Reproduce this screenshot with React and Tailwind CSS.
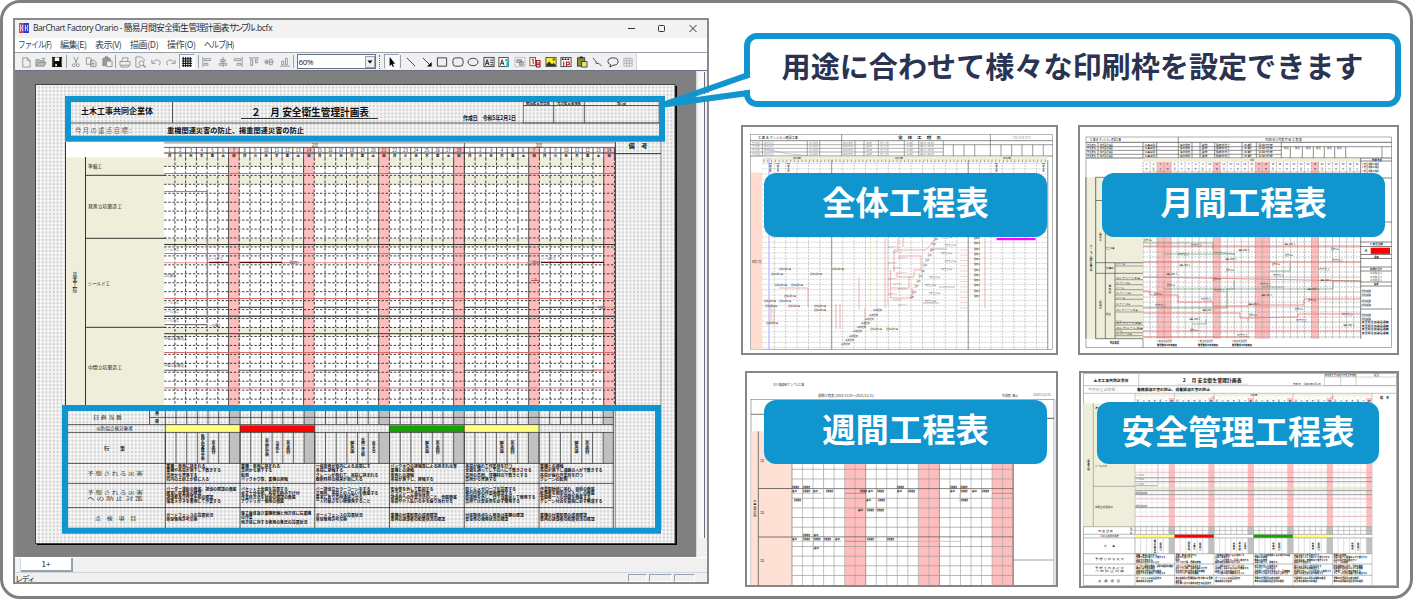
import React from "react";

const BLUE = "#1095ce";
const range = (n) => Array.from({ length: n }, (_, i) => i);

/* ---------- small svg helpers ---------- */

// t = text, w = width the text is fitted to
const T = ({ x, y, s = 5, w, t, fill = "#111", bold, anchor, vertical }) => (
  <text
    x={x}
    y={y}
    fontSize={s}
    fill={fill}
    fontWeight={bold ? 700 : 400}
    textAnchor={anchor}
    textLength={w}
    lengthAdjust={w ? "spacingAndGlyphs" : undefined}
    writingMode={vertical ? "vertical-rl" : undefined}
  >
    {t}
  </text>
);

const H = ({ y, x1, x2, c = "#333", w = 0.8, dash }) => (
  <line x1={x1} x2={x2} y1={y} y2={y} stroke={c} strokeWidth={w} strokeDasharray={dash} />
);

const V = ({ x, y1, y2, c = "#333", w = 0.8, dash }) => (
  <line x1={x} x2={x} y1={y1} y2={y2} stroke={c} strokeWidth={w} strokeDasharray={dash} />
);

const Box = ({ x1, y1, x2, y2, fill = "none", c, w = 0.6 }) => (
  <rect x={x1} y={y1} width={x2 - x1} height={y2 - y1} fill={fill} stroke={c} strokeWidth={w} />
);

const WEEK = ["月", "火", "水", "木", "金", "土", "日"];

const RISKS = [
  ["重機・車両に挟まれる", "重機や吊荷が落下し下敷きする", "高所から墜落する", "坑内の土砂上が目に入る"],
  ["重機・車両に挟まれる", "高所から落下する", "転倒", "バックホウ等、重機の接触"],
  ["一般車両が車内による追突にす", "吊荷に接触する", "クレーンが倒れて、吊荷に挟まれる", "掘削残材の飛来が目に入る"],
  ["バックホウの接触等による挟まれ災害", "重機との接触", "車両との接触", "吊荷が落下し、接触する"],
  ["吊荷が振れて作業員を打つ", "合図を誤ってし下の人に下敷きさせる", "高所の高所、資機材の下敷きとする", "高所から墜落する"],
  ["重機との接触", "吊荷が落下し通路の人が下敷きする", "吊荷が振れ作業員を打つ", "クレーンの転倒"],
];

const MEASURES = [
  ["バーダー運転の徹底、誘導の確認の徹底", "確実に荷重及の確認", "誘導者及び作業手順の確認", "保護メガネを着用して作業する"],
  ["バケット土合図を設置する", "必ず十分手順、吊荷を積み下げ付", "作業員方法を状態の確認の徹底", "アウトリガー使用の徹底"],
  ["バー誘導立カラーコーンをする", "立哨員、吊荷との人払いを徹底する", "基本に反り高所通過させる", "一人行動さない様使用すること"],
  ["安全帯を外して監視する", "グラウシーグ吊の設置", "誘導員への作業方法のこと、合図徹底", "吊荷や介人払いる手を振り当わせる"],
  ["防じんメガローブを設置する", "移行内等の作業場確認する", "防護時を外し、日下活重量して使用する", "高所では安全帯を必ず使用する"],
  ["作業開始前に吊れ、目前の徹底", "転落者を固定の立入さしの徹底", "合図者一人の合図を徹底する", "グレーン付近を基盤に必ず無運する"],
];

const CHECKS = [
  ["ガードフェンスの設置状況", "電球使用許可交換"],
  ["施工崩体及び重機配備と他方体に右重機", "の作業", "他方体に対する使用の各圧の設置状況"],
  ["ガードフェンスの設置状況", "電球使用許可交換"],
  ["重機の付重配置の成否確認", "車両の誘導者の配置状況の確認"],
  ["付属物吊点なん用及は事務の確認", "安全帯の使用状況の確認"],
  ["重機の付重配置の成否確認", "車両の誘導者の配置状況の確認"],
];

const EVENTS = [
  ["", "", "", "新規入場者教育実施", "安全巡回日", ""],
  ["", "", "安全朝礼実施", "災害防止", "安全巡回日", ""],
  ["", "", "", "職長会議", "重機一斉点検", "安全大会"],
  ["", "", "", "職長会議", "安全巡回日", ""],
  ["", "", "", "職長会議", "安全巡回日", ""],
  ["", "", "", "職長会議", "安全巡回日", ""],
];

const WEEK_COLORS = ["#ffff80", "#ff0000", "none", "#1ca008", "#ffff80", "none"];

/* ---------- main sheet inside the window ---------- */

const X0 = 164.2;
const DW = 10.72;
const X1 = X0 + DW * 42;

const SheetHeader = () => (
  <g>
    <V x={172.5} y1={102} y2={123} />
    <H y={123} x1={71} x2={659} c="#555" w={1} />
    <T x={81} y={114} s={7.6} w={72} t="土木工事共同企業体" bold />
    <T x={251} y={115.5} s={10.6} w={118} t="２　月 安全衛生管理計画表" bold />
    <H y={118.5} x1={241} x2={378} w={1} />
    <T x={463} y={120} s={5.5} w={53} t="作成日　令和5年2月1日" bold />
    <T x={75} y={132.5} s={6.6} w={56} t="今 月 の 重 点 目 標 :" fill="#666" />
    <T x={167} y={132.5} s={7} w={137} t="重機関連災害の防止、揚重関連災害の防止" bold />
    <Box x1={523.5} y1={98} x2={659} y2={123} c="#444" />
    <H y={105.5} x1={523.5} x2={659} />
    <V x={553.7} y1={98} y2={123} />
    <V x={584.3} y1={98} y2={123} />
    <T x={526} y={104.2} s={5} w={24} t="統括安全責任者" bold />
    <T x={557} y={104.2} s={5} w={24} t="元方安全管理者" bold />
    <T x={617} y={104.2} s={5} w={9} t="担当" bold />
  </g>
);

const SheetGrid = () => (
  <g>
    <rect x="65" y="140" width="99.5" height="18" fill="#fff" />
    <rect x="65" y="157.5" width="99.5" height="250" fill="#efeedb" />
    <rect x={X0} y="142" width={X1 - X0} height="266" fill="#fff" />
    {[[157.5, 9], [175.3, 9], [238.3, 9], [327.3, 7.5]].map(([y, h]) => (
      <rect key={y} x={X0} y={y} width={X1 - X0} height={h} fill="#efeedb" />
    ))}
    {range(6).map((i) => (
      <rect key={i} x={X0 + DW * (i * 7 + 6)} y="147.5" width={DW} height="260" fill="#ffbebe" />
    ))}

    {/* calendar head */}
    <H y={142.9} x1={X0} x2={X1} c="#888" w={1} />
    <H y={147.4} x1={X0} x2={X1} />
    <H y={153} x1={X0} x2={X1} w={1} />
    <T x={315} y={147} s={4.2} t="2月" anchor="middle" />
    <T x={539} y={147} s={4.2} t="3月" anchor="middle" />
    <V x={X0 + DW * 28} y1={143} y2={408} />
    {range(42).map((i) => (
      <g key={i}>
        <T x={X0 + DW * (i + 0.5)} y={152.2} s={4.3} t={(i % 28) + 1} anchor="middle" />
        <T x={X0 + DW * (i + 0.5)} y={157} s={3.8} t={WEEK[i % 7]} anchor="middle" bold />
        <V x={X0 + DW * (i + 1)} y1={147.5} y2={158} />
        <V
          x={X0 + DW * (i + 1)}
          y1={158}
          y2={406}
          w={i % 7 === 5 ? 1.1 : 0.95}
          c={i % 7 === 5 ? "#555" : "#333"}
          dash={i % 7 === 5 ? undefined : "2.6 1.9"}
        />
      </g>
    ))}
    {range(28).map((i) => (
      <H key={i} y={166.4 + i * 8.95} x1={X0} x2={X1} w={0.95} dash="2.4 1.7" />
    ))}

    {/* left headings */}
    <V x={65.5} y1={142} y2={408} w={1} />
    <V x={85.5} y1={157} y2={408} w={1} />
    {[175.3, 238.3, 327.3].map((y) => (
      <H key={y} y={y} x1={85} x2={166} w={1} />
    ))}
    <T x={75} y={272} s={4.8} w={21} t="基本工程" vertical />
    <T x={88} y={168} s={4.8} w={14} t="準備工" />
    <T x={88} y={208.3} s={4.8} w={34} t="発進立坑築造工" />
    <T x={88} y={285} s={4.8} w={22} t="シールド工" />
    <T x={88} y={369.3} s={4.8} w={34} t="中間立坑築造工" />

    {/* solid bars */}
    <H y={173.5} x1={X0} x2={X1} c="#d46a6a" w={1} />
    <H y={244.5} x1={X0} x2={X1} w={1.1} />
    <H y={253.5} x1={X0} x2={539} c="#d07070" w={1} />
    <H y={262.6} x1={X0} x2={539} c="#eaa6a6" w={1.4} />
    <H y={298.5} x1={X0} x2={X1} c="#d07070" w={1} />
    <H y={316.2} x1={X0} x2={X1} c="#555" w={1.4} />
    <H y={333.6} x1={X0} x2={X1} c="#55554a" w={1.4} />
    <H y={352.5} x1={X0} x2={X1} c="#d86a6a" w={1.1} />
    <H y={387.8} x1={X0} x2={X1} c="#e08a8a" w={1.3} />
    {range(6).map((i) => (
      <g key={i}>
        <H y={307.4} x1={X0 + i * 7 * DW} x2={X0 + (i * 7 + 6) * DW} c="#555" w={1.1} />
        <H y={370.3} x1={X0 + i * 7 * DW} x2={X0 + (i * 7 + 6) * DW} c="#555" w={1.1} />
      </g>
    ))}
    <H y={262.4} x1={209} x2={228.5} c="#5c0a14" w={1.3} />
    <H y={262.4} x1={239.5} x2={282} c="#5c0a14" w={1.3} />
    <H y={262.4} x1={541} x2={604} c="#5c0a14" w={1.3} />
    <H y={253.5} x1={539} x2={604} c="#4fc08d" w={1} />
    <path d="M539.5 253.5V280.5H531" fill="none" stroke="#e85c5c" strokeWidth="1" />
    <path d={`M${X0} 191.5H207.5V323`} fill="none" stroke="#c468cc" strokeWidth="1.2" />
    <H y={324.7} x1={X0} x2={207} c="#777" w={1.3} />
    <H y={307.4} x1={594} x2={X1} c="#e88" w={1} />
    <H y={370.3} x1={594} x2={X1} c="#e88" w={1} />
    {[[164, 250.5, "シールド工"], [164, 277, "立坑鋼工"], [164, 304, "シールド工"], [164, 313, "シールド工"], [164, 321.5, "シールド工"], [208, 259.5, "シールド工"], [209, 326.5, "一次覆工"], [284, 263.5, "(一回目)"], [527, 263.5, "(二回目)"], [541, 259.5, "シールド工"], [531, 281, "二次"], [597, 308.5, "中詰工"]].map(([x, y, t]) => (
      <T key={`${x}-${y}`} x={x} y={y} s={3.6} t={t} w={t.length * 3} fill="#444" />
    ))}
    <T x={164} y={340} s={4} w={23} t="中間立坑築造工" fill="#333" />
    <T x={164} y={367} s={4} w={23} t="中間立坑築造工" fill="#333" />

    {/* remarks column */}
    <V x={X1 + 0.9} y1={142} y2={406} w={1} />
    <V x={661} y1={140} y2={530} c="#777" />
    <H y={153.6} x1={X1} x2={661} w={1} />
    <T x={628.5} y={147.5} s={5.6} t="備　考" w={19} bold />
  </g>
);

const SheetFooter = () => (
  <g>
    {WEEK_COLORS.map((c, i) => {
      const x = 165.3 + i * 74.75;
      return (
        <g key={i}>
          <rect x={x + 64.2} y="410" width="10.3" height="14.7" fill="#c0c0c0" />
          <rect x={x + 64.2} y="432.3" width="10.3" height="31" fill="#c0c0c0" />
          <rect x={x} y="425.3" width="74.6" height="6.8" fill={c} />
          {range(7).map((d) => (
            <g key={d}>
              <V x={x + d * 10.68} y1={410} y2={424.7} />
              <V x={x + d * 10.68} y1={432.3} y2={463.3} w={0.75} />
              {EVENTS[i][d] ? (
                <T
                  x={x + d * 10.68 + 5.5}
                  y={447.5 - EVENTS[i][d].length * 1.45}
                  s={4}
                  w={EVENTS[i][d].length * 2.9}
                  t={EVENTS[i][d]}
                  vertical
                  bold
                />
              ) : null}
            </g>
          ))}
          <V x={x} y1={425} y2={528} />
          {RISKS[i].map((t, n) => (
            <T key={n} x={x + 1} y={468.2 + n * 4.25} s={4} w={Math.min(72, t.length * 3.9)} t={t} bold />
          ))}
          {MEASURES[i].map((t, n) => (
            <T key={n} x={x + 1} y={490.6 + n * 4.25} s={4} w={Math.min(72, t.length * 3.9)} t={t} bold />
          ))}
          {CHECKS[i].map((t, n) => (
            <T key={n} x={x + 1} y={517 + n * 4.25 - (CHECKS[i].length - 2) * 2} s={4} w={Math.min(72, t.length * 3.9)} t={t} bold />
          ))}
        </g>
      );
    })}
    <V x={149.5} y1={410} y2={424.7} />
    <H y={417.4} x1={149.5} x2={613.5} />
    {[424.6, 432.4, 463.4, 483.4, 507.6].map((y) => (
      <H key={y} y={y} x1={68} x2={613.5} />
    ))}
    <V x={613.3} y1={406} y2={528} />
    <V x={615.3} y1={406} y2={528} c="#777" />
    <T x={93} y={419.3} s={4.6} w={29} t="日 直 当 番" />
    <T x={155} y={415.3} s={4} t="昼" bold />
    <T x={155} y={422.5} s={4} t="夜" bold />
    <T x={96} y={430.3} s={4.4} w={37} t="災防協点検対象者" />
    <T x={104} y={450} s={5} w={21} t="行　　事" bold />
    <T x={87} y={475} s={4.6} w={56} t="予 想 さ れ る 災 害" fill="#333" />
    <T x={87} y={494} s={4.6} w={56} t="予 想 さ れ る 災 害" fill="#333" />
    <T x={87} y={500} s={4.6} w={56} t="へ の 防 止 対 策" fill="#333" />
    <T x={95} y={519.5} s={4.8} w={41} t="点　検　項　目" />
  </g>
);

const Sheet = () => (
  <svg className="block" width="645" height="464" viewBox="34 83 645 464" fontFamily="'Noto Sans CJK JP', sans-serif">
    <defs>
      <pattern id="dots" width="3.72" height="3.72" patternUnits="userSpaceOnUse">
        <rect width="3.72" height="3.72" fill="#fbfbfb" />
        <rect x="0.6" y="0.6" width="2.3" height="2.5" fill="#d2d2d2" />
      </pattern>
    </defs>
    <rect x="37" y="86" width="640" height="459" fill="#000" />
    <rect x="35.5" y="84.5" width="639.5" height="459" fill="url(#dots)" stroke="#444" strokeWidth="1" />
    <SheetHeader />
    <SheetGrid />
    <SheetFooter />
    <rect x="68" y="99" width="594" height="39.7" fill="none" stroke={BLUE} strokeWidth="6" />
    <rect x="65" y="408" width="593" height="122.7" fill="none" stroke={BLUE} strokeWidth="6" />
  </svg>
);

/* ---------- window chrome ---------- */

const G = "#8a8a8a";

const Tool = ({ children, pressed }) => (
  <span
    className={`flex h-[15px] w-[15.5px] shrink-0 items-center justify-center ${
      pressed ? "border border-gray-400 border-r-white border-b-white bg-gray-50" : ""
    }`}
  >
    <svg width="12" height="12" viewBox="0 0 13 13" fill="none" stroke={G} strokeWidth="0.9" className="shrink-0">
      {children}
    </svg>
  </span>
);

const Sep = () => <span className="mr-[1px] h-[13px] w-[1px] shrink-0 bg-gray-400" />;

const Toolbar = () => (
  <div className="flex h-[18px] shrink-0 items-center border-t border-gray-400 bg-white">
    <div className="flex h-[17px] w-[621px] shrink-0 items-center bg-[#f0f0f0] pl-[3px]">
      <Tool><path d="M3 2h5l3 3v7H3zM8 2v3h3" /></Tool>
      <Tool><path d="M1 11V4h4l1 1h4v2M1 11l3-4h8l-2 4zM7 3q3-2 4 1" fill="#bbb" /></Tool>
      <Tool>
        <rect x="1.5" y="1.5" width="10" height="10" fill="#000" stroke="#000" />
        <path d="M2 2v9M11.5 2v9" stroke="#8a8a20" />
        <rect x="4" y="1.5" width="5" height="4" fill="#fff" stroke="none" />
        <rect x="4.5" y="8.5" width="2" height="2.5" fill="#ddd" stroke="none" />
      </Tool>
      <span className="w-[2px]" /><Sep />
      <Tool><path d="M4 1l3.5 7M9 1L5.5 8" /><circle cx="4" cy="10" r="1.6" /><circle cx="8.5" cy="10" r="1.6" /></Tool>
      <Tool><path d="M1.5 2h4l2 2v5h-6zM6 4.5h4l2 2v5H6zM7.5 8h3M7.5 9.8h3" /></Tool>
      <Tool><path d="M2 2.5h8v8H2z" fill="#999" /><path d="M6 5.5h6v6H6z" fill="#eee" /><path d="M4 1.5h4" strokeWidth="2" /></Tool>
      <span className="w-[1px]" /><Sep />
      <Tool><path d="M3 6l1-4h6l-1 4M1 6h11v4H1zM3 10l-1 2h8l1-2" /></Tool>
      <Tool><path d="M2 1h6l3 3v2M2 1v11h5" /><circle cx="8" cy="8" r="2.6" /><path d="M10 10l2.5 2.5" strokeWidth="1.4" /></Tool>
      <Tool><path d="M2 4v4h4M2.5 7.5Q7 2 11 6q.5 2-1 4" /></Tool>
      <Tool><path d="M11 4v4H7M10.5 7.5Q6 2 2 6q-.5 2 1 4" /></Tool>
      <Tool pressed><path d="M1 3h11M1 5.5h11M1 8h11M1 10.5h11M2.5 1v11M5 1v11M7.5 1v11M10 1v11" stroke="#000" strokeWidth="1" /></Tool>
      <span className="w-[4px]" /><Sep />
      <Tool><path d="M2 1v11M3.5 3h7v2h-7zM3.5 8h4v2h-4z" /></Tool>
      <Tool><path d="M6.5 1v11M4 4h5v2H4zM2.5 8h8v2h-8z" /></Tool>
      <Tool><path d="M11 1v11M2.5 3h7v2h-7zM5.5 8h4v2h-4z" /></Tool>
      <Tool><path d="M1 2h11M3 3.5h2v7H3zM8 3.5h2v4H8z" /></Tool>
      <Tool><path d="M1 6.5h11M3 4.5h2v4H3zM7 3.5h3v6H7z" /></Tool>
      <Tool><path d="M1 11h11M3 5.5h2v4H3zM7 2.5h2v7H7z" /></Tool>
      <Sep />
      <div className="ml-[2px] flex h-[15px] w-[79px] shrink-0 items-center justify-between border border-gray-500 bg-white pl-[1px] text-[8px] leading-none text-gray-900">
        <span className="font-['Open_Sans'] tracking-[-0.4px]">60%</span>
        <span className="flex h-[12px] w-[10px] items-center justify-center border border-gray-400 bg-[#f0f0f0]">
          <svg width="6" height="4" viewBox="0 0 6 4"><path d="M0.5 0.5h5l-2.5 3z" fill="#000" /></svg>
        </span>
      </div>
      <span className="mx-[3px] h-[14px] w-[2px] shrink-0 border-l border-dotted border-gray-500" />
      <Tool pressed><path d="M5 1v10l2-2 1.5 3 1.2-.6L8.3 8.5H11z" fill="#000" stroke="none" /></Tool>
      <span className="ml-[1px]" /><Sep />
      <span className="w-[2px]" />
      <Tool><path d="M2 2l9 9" stroke="#222" /></Tool>
      <Tool><path d="M2 2l7 7" stroke="#222" /><path d="M11.5 11.5v-5l-5 5z" fill="#000" stroke="none" /></Tool>
      <Tool><path d="M1.5 2h10v9h-10z" stroke="#222" /></Tool>
      <Tool><rect x="1" y="2" width="11" height="9" rx="3" stroke="#222" /></Tool>
      <Tool><ellipse cx="6.5" cy="6.5" rx="5.5" ry="4" stroke="#222" /></Tool>
      <Tool><rect x="1" y="1.5" width="11" height="10" fill="#e5e5e5" stroke="#333" /><path d="M2.5 10l2-6 2 6M3.2 8h2.6M8 4.5h3M8 7h3M8 9.5h3" stroke="#111" /></Tool>
      <Tool><rect x="1" y="1.5" width="10" height="10" fill="#fff" stroke="#333" /><path d="M2.5 10l2-6 2 6M3.2 8h2.6" stroke="#111" /><path d="M9 3.5v2M10.5 6v6" stroke="#0ab4c4" strokeWidth="2.6" /></Tool>
      <Tool><path d="M1 1.5h11v10H1z" strokeDasharray="1 1" /><path d="M3 4h5v3H3zM6 6h4v4H6z" fill="#bbb" /></Tool>
      <Tool><rect x="1" y="1.5" width="6" height="9" fill="#fff" stroke="#a22" /><path d="M3 3.5h1.5V9M8 5h4v7H8zM8 7.5h4M8 9.5h4" stroke="#a01818" strokeWidth="1.1" /></Tool>
      <Tool><rect x="1" y="1.5" width="11" height="10" fill="#f6ee2c" stroke="#444" /><path d="M1.5 11V9l3-3 3 3 2-1.5 2 2V11z" fill="#333" stroke="none" /><circle cx="9.5" cy="3.8" r="1" stroke="#333" /></Tool>
      <Tool><rect x="1" y="1.5" width="11" height="10" fill="#fff" stroke="#333" /><path d="M2 3.5h9" stroke="#111" strokeWidth="1.6" strokeDasharray="2 1" /><path d="M4 6v5M7 6v5M7 6.5h3v3H7" stroke="#b01818" strokeWidth="1.2" /></Tool>
      <Tool><rect x="1.5" y="2" width="8" height="9" fill="#8b8b3a" stroke="#333" /><path d="M4 1.5h3.5" stroke="#222" strokeWidth="1.8" /><path d="M6 6h6v6H6z" fill="#e8e070" stroke="#22366e" /></Tool>
      <Tool><path d="M2 2l3.5 4v2h3l3 3" stroke="#333" /></Tool>
      <Tool><path d="M4 9.5Q1 8.500 1 6q0-4 5.500-4T12 6q0 4-5.500 4L3 12z" stroke="#222" /></Tool>
      <Tool><path d="M2 2.5h9v8.5H2zM2 5.3h9M2 8h9M5 2.5v8.5M8 2.5v8.5" stroke="#aaa" /></Tool>
    </div>
    <div className="h-[17px] w-[1px] bg-gray-300" />
  </div>
);

const menus = [
  { label: "ファイル(F)", box: "w-[42px]", text: "origin-left scale-x-[0.84] tracking-[-1.1px]" },
  { label: "編集(E)", box: "w-[35px]", text: "tracking-[-0.6px]" },
  { label: "表示(V)", box: "w-[35px]", text: "tracking-[-0.6px]" },
  { label: "描画(D)", box: "w-[37px]", text: "tracking-[-0.4px]" },
  { label: "操作(O)", box: "w-[37px]", text: "tracking-[-0.4px]" },
  { label: "ヘルプ(H)", box: "w-[40px]", text: "origin-left scale-x-[0.89] tracking-[-1.1px]" },
];

const AppWindow = () => (
  <div className="flex h-[566px] w-[696px] shrink-0 flex-col overflow-hidden border-2 border-[#8a8a8a] bg-[#f0f0f0]">
    <div className="flex h-[18px] shrink-0 items-center bg-[#f2f2f2] pb-[2px] pl-[4px]">
      <svg width="10" height="10" viewBox="0 0 11 11">
        <rect width="5.5" height="11" fill="#e0304a" />
        <rect x="5.5" width="5.5" height="11" fill="#2338d8" />
        <path d="M1.5 1.5v8M4 2v3M4 6v3M7 2v7M9.5 2v3M9.5 6v3M1.5 5.5h2.5M7 5.5h2.5" stroke="#fff" strokeWidth="0.9" />
      </svg>
      <span className="ml-[4px] whitespace-nowrap text-[8.7px] leading-none text-gray-800">
        <span className="font-['Open_Sans'] text-[8.5px] tracking-[-0.42px]">BarChart Factory Orario - </span>
        <span className="tracking-[-0.6px]">簡易月間安全衛生管理計画表</span>
        <span className="tracking-[-2.6px]">サンプル</span>
        <span className="ml-[2px] font-['Open_Sans'] text-[8.5px] tracking-[-0.3px]">.bcfx</span>
      </span>
      <svg className="ml-auto mr-[10px]" width="70" height="9" viewBox="0 0 70 9" fill="none" stroke="#333">
        <path d="M1 4.5h7" />
        <rect x="31.5" y="1.5" width="6" height="6" rx="1" />
        <path d="M62.5 1l7 7M69.5 1l-7 7" />
      </svg>
    </div>
    <div className="flex h-[14px] shrink-0 items-center bg-white pb-[1px] pl-[3px] text-[9px] leading-none text-gray-700">
      {menus.map((m) => (
        <span key={m.label} className={`shrink-0 whitespace-nowrap ${m.box} ${m.text}`}>
          {m.label}
        </span>
      ))}
    </div>
    <Toolbar />
    <div className="flex h-[487px] shrink-0 border-t border-gray-500 bg-[#808080]">
      <div className="flex-1 pl-[19px] pt-[12px]">
        <Sheet />
      </div>
      <div className="flex w-[11px] shrink-0 justify-center border-l border-gray-300 bg-[#f0f0f0]">
        <div className="mt-[1px] h-[466px] w-[6px] border-r border-gray-500 bg-gray-50" />
      </div>
    </div>
    <div className="flex h-[15px] shrink-0 items-start border-t border-white pl-[1px]">
      <div className="h-[13px] w-[5px] border-r border-gray-300 bg-gray-100" />
      <div className="flex h-[14px] w-[52px] items-center justify-center border-r-2 border-b-2 border-gray-400 bg-white text-[8px] leading-none text-gray-900">
        1+
      </div>
    </div>
    <div className="flex min-h-0 flex-1 items-start justify-between border-t border-gray-300">
      <span className="text-[8px] leading-[11px] tracking-[-1.5px] text-gray-800">レディ</span>
      <div className="mr-[12px] mt-[1px] flex gap-[2px]">
        <span className="h-[8px] w-[19px] border border-gray-400 border-r-white border-b-white" />
        <span className="h-[8px] w-[23px] border border-gray-400 border-r-white border-b-white" />
        <span className="h-[8px] w-[21px] border border-gray-400 border-r-white border-b-white" />
      </div>
    </div>
  </div>
);

/* ---------- sample thumbnails ---------- */

const OverallChart = () => (
  <g>
    <Box x1={750.5} y1={134.3} x2={1052.7} y2={349.5} c="#888" />
    <T x={758} y={139.3} s={3.4} w={40} t="工 事 名 マンション建設工事" />
    <T x={898} y={139.3} s={3.6} w={43} t="全　体　工　程　表" bold />
    <T x={1013} y={139} s={3} w={18} t="作成: 2020年1月1日" fill="#999" />
    {[140.7, 156].map((y) => <H key={y} y={y} x1={750.5} x2={1052.7} c="#555" w={0.7} />)}
    {[144.7, 148.3, 152].map((y) => <H key={y} y={y} x1={750.5} x2={943.3} c="#777" w={0.6} />)}
    <H y={144.7} x1={943} x2={1052.7} c="#555" w={0.6} />
    {[841.7, 990.3].map((x) => <V key={x} x={x} y1={134.3} y2={156} c="#555" w={0.6} />)}
    {[762.3, 807.3, 819.7, 855, 864, 878.3, 904.3, 918.7, 943.3].map((x) => (
      <V key={x} x={x} y1={140.7} y2={156} c="#666" w={0.6} />
    ))}
    {[953.3, 964, 974.7, 1001, 1011.7, 1022, 1032.7, 1043.3].map((x) => (
      <V key={x} x={x} y1={144.7} y2={156} c="#555" w={0.6} />
    ))}
    {range(4).map((r) => (
      <g key={r}>
        {[[752, "発注者", 8], [764, "株式会社", 10], [809, "設計監理", 9], [843, "構造規模", 10], [866, "建物", 6], [880, "地上階", 9], [906, "工期", 7], [920, "着工 完成", 14]].map(([x, t, w]) => (
          <T key={x} x={x} y={143.6 + r * 3.8} s={2.4} w={w} t={t} fill="#999" />
        ))}
      </g>
    ))}
    <path d="M764 148.5Q785 155 807 155.5" stroke="#999" strokeWidth="0.5" fill="none" />
    <rect x="762.3" y="156.5" width="285" height="5.5" fill="#f1f0dc" />
    <T x={797} y={158.8} s={2.5} t="2020年" anchor="middle" />
    <T x={899} y={158.8} s={2.5} t="2021年" anchor="middle" />
    <T x={1007} y={158.8} s={2.5} t="2022年" anchor="middle" />
    {range(75).map((i) => <V key={i} x={764 + i * 3.8} y1={159.5} y2={162.5} c="#777" w={0.6} />)}
    {range(25).map((i) => (
      <V key={i} x={774.3 + i * 11.4} y1={162} y2={349} c="#aaa" w={0.6} dash="2 1" />
    ))}
    {range(36).map((i) => (
      <H key={i} y={163.5 + i * 5.26} x1={762.3} x2={1047.7} c="#bbb" w={0.6} dash="2 1" />
    ))}
    <rect x="751" y="172.5" width="11.3" height="177" fill="#ffdccf" />
    <T x={752} y={262.5} s={3} w={9.5} t="新築工程" fill="#555" />
    {[831.7, 968.3, 1047.7].map((x) => <V key={x} x={x} y1={160} y2={349.5} c="#777" w={0.7} />)}
    <V x={769} y1={158} y2={349} c="#c5c8ff" w={1.6} />
    <V x={870.5} y1={236} y2={308} c="#d8dca8" w={0.5} />
    <V x={887.8} y1={236} y2={305} c="#d8a8e0" w={0.5} />
    {[770.5, 778, 788.5, 996.5, 1043.5].map((x) => (
      <g key={x}>
        <rect x={x - 1.5} y="163" width="3" height="1.2" fill="#10d820" />
        <T x={x} y={165} s={2.4} t="着工日" vertical />
      </g>
    ))}
    <rect x="996.5" y="238" width="39" height="2.2" fill="#f0f" />
    <path
      d="M885 238V308M894 250V272M890.5 270V298H912V287M894 250H926L936 238M898 256H921V270H914M897 272V277H914V271M891 288H909V276M903 236V247M898 238V250M985 238V308M808 288V307M779 288H808M859 277V309M771 304V324M774 305V324M865 308V326M836 304V329M840 304V329"
      fill="none"
      stroke="#e49494"
      strokeWidth="0.7"
    />
    {range(12).map((i) => (
      <g key={i}>
        <H y={250 + i * 5.26} x1={960} x2={968} c="#e99" w={0.5} />
        <T x={974} y={239 + i * 5.26} s={2.3} w={6} t="鉄筋工" fill="#333" />
        <T x={934 - i * 2.2} y={240 + i * 5.26} s={2.3} w={4} t="型枠" fill="#555" />
        <T x={888 + (i % 3) * 5} y={248 + i * 5.26} s={2.3} w={9} t="コンクリート" fill="#555" />
      </g>
    ))}
    {range(9).map((i) => (
      <g key={i}>
        <T x={(i > 4 ? 925 : 941) + (i % 2) * 4} y={238 + i * 8} s={2.3} w={11} t="内装仕上工事" fill="#666" />
        <T x={841 + i * 4} y={345 - i * 4.2} s={2.3} w={9} t="基礎配筋" fill="#555" />
      </g>
    ))}
    {[[931, 249], [939, 287], [923, 303]].map(([x, y]) => <H key={x} y={y} x1={x} x2={x + 16} c="#888" w={0.6} />)}
    {[[779, 270], [771, 275], [810, 275], [775, 286], [791, 286], [784, 297], [764, 302], [779, 302], [765, 307], [788, 307], [814, 307], [814, 311], [766, 324], [832, 270], [870, 329.5], [886, 329.5]].map(([x, y]) => (
      <T key={`${x}-${y}`} x={x} y={y} s={2.4} w={12} t="躯体基礎工事" fill="#555" />
    ))}
  </g>
);

const RED_COLS = [2, 3, 10, 16, 17, 24];

const MonthlyChart = () => (
  <g>
    <Box x1={1086} y1={137} x2={1391.7} y2={347.7} c="#777" />
    <T x={1090} y={140.6} s={3} w={31} t="工 事 名 マンション建設工事" />
    <T x={1265} y={140.6} s={3} w={37} t="令和5年 3 月度 月 間 工 程 表" />
    <H y={142.3} x1={1086} x2={1391.7} c="#333" w={0.7} />
    <V x={1178.3} y1={137} y2={158} c="#444" w={0.6} />
    {[146.7, 150.3, 154.3].map((y) => <H key={y} y={y} x1={1086} x2={1281.3} c="#444" w={0.6} />)}
    <H y={158} x1={1086} x2={1391.7} c="#333" w={0.7} />
    <H y={146.7} x1={1281} x2={1391.7} c="#444" w={0.6} />
    {[1098, 1143, 1156.7, 1192, 1200, 1214.7, 1242, 1256.3, 1281.3].map((x) => (
      <V key={x} x={x} y1={142.3} y2={158} c="#444" w={0.6} />
    ))}
    {[1290.3, 1302.3, 1313.3, 1324.3, 1334.7, 1345.7, 1382].map((x) => (
      <V key={x} x={x} y1={146.7} y2={158} c="#444" w={0.6} />
    ))}
    {range(4).map((r) => (
      <g key={r}>
        {[[1087, "発注者名", 9], [1100, "株式会社建設", 13], [1144.5, "工事場所", 11], [1180, "構造規模", 10], [1201.5, "建物", 6], [1216, "鉄筋造地上", 14], [1243.5, "工期", 8], [1258, "令和元年", 15]].map(([x, t, w]) => (
          <T key={x} x={x} y={145.5 + r * 3.9} s={2.5} w={w} t={t} fill="#222" />
        ))}
      </g>
    ))}
    {[1284, 1295, 1306, 1316, 1327, 1337].map((x) => <T key={x} x={x} y={149.3} s={2.4} t="所長" />)}

    <rect x="1143" y="158.3" width="217.7" height="3.7" fill="#efeedb" />
    <T x={1252} y={161} s={2.5} t="3月" anchor="middle" />
    {RED_COLS.map((c) => (
      <rect key={c} x={1143 + c * 7.02} y="162" width="7.1" height="176.7" fill="#ffbebe" />
    ))}
    {range(31).map((i) => (
      <g key={i}>
        <V x={1143 + i * 7.02} y1={162} y2={338.7} c="#888" w={0.6} dash="2 0.8" />
        <T x={1146.5 + i * 7.02} y={165} s={2.6} t={i + 1} anchor="middle" />
        <T x={1146.5 + i * 7.02} y={169.5} s={2.6} t={WEEK[(i + 3) % 7]} anchor="middle" fill={i % 7 === 3 ? "#22f" : "#443"} />
      </g>
    ))}
    {range(34).map((i) => (
      <H key={i} y={172 + i * 5} x1={1143} x2={1360.7} c="#888" w={0.5} dash={i % 3 ? "2 1" : undefined} />
    ))}

    <rect x="1086" y="177.3" width="57" height="161.5" fill="#efeedb" />
    {[1086, 1095.7].map((x) => <V key={x} x={x} y1={177.3} y2={338.7} w={0.7} />)}
    <V x={1105.3} y1={177.3} y2={338.7} w={0.6} />
    <V x={1115} y1={262.7} y2={338.7} w={0.6} />
    {[177.3, 200.5, 262.7, 273.3, 338.7].map((y) => <H key={y} y={y} x1={1095.7} x2={1143} w={0.6} />)}
    {[266, 279.7, 284.7, 289.7, 295, 299.3, 306, 312, 322.3, 325, 329.3, 332.7, 335.7].map((y, i) => (
      <g key={y}>
        <H y={y} x1={1115} x2={1143} c="#444" w={0.5} />
        <T x={1116} y={y - 0.8} s={2.3} w={[9, 24, 14, 8, 15, 9, 14, 22, 5, 25, 27, 6, 16][i]} t="コンクリート工事" />
      </g>
    ))}
    <T x={1091} y={245} s={3} w={26} t="マンション建設工事工程" vertical />
    <T x={1100.5} y={233} s={2.8} t="建築工" vertical />
    <T x={1100.5} y={301} s={2.8} t="設備工" vertical />
    <T x={1110} y={285} s={2.8} t="電気設" vertical />
    <T x={1106} y={249} s={2.8} w={8.5} t="仕上工事" />
    <T x={1106} y={268.5} s={2.8} w={8} t="外構工" />
    <T x={1106} y={315} s={2.8} w={5} t="衛生" />

    <path
      d="M1143 246H1361M1143 262H1361M1143 291H1150V295H1178V302H1213V306H1248V305H1304V299H1361M1143 313H1240V318H1248V321M1248 318L1298 317V314H1361M1143 331H1361M1143 337H1250M1143 277L1361 281"
      fill="none"
      stroke="#f07070"
      strokeWidth="0.8"
    />
    <path
      d="M1143 243H1213V250M1164 254H1235M1164 289H1234V281M1143 308H1227V289H1333V281H1360M1192 324H1206V319M1213 252L1235 254M1262 287H1284M1270 271H1290V263"
      fill="none"
      stroke="#5a8a5e"
      strokeWidth="0.6"
    />
    {range(36).map((i) => (
      <T
        key={i}
        x={1144 + ((i * 47) % 200)}
        y={241 + ((i * 5) % 96)}
        s={2.3}
        w={8 + (i % 3) * 3}
        t={["配管工事", "内装仕上", "墨出し"][i % 3]}
        fill="#444"
      />
    ))}

    <V x={1360.7} y1={158} y2={338.7} w={0.6} />
    {[161, 178, 222, 242, 246.5, 254.5, 258.5, 267, 271, 282, 286, 309].map((y) => (
      <H key={y} y={y} x1={1360.7} x2={1391.7} c="#333" w={0.6} />
    ))}
    <T x={1372} y={160.6} s={2.3} w={10} t="作業予定" bold />
    {[164.5, 168.2, 172].map((y) => <T key={y} x={1362} y={y} s={2.4} w={17} t="1.安全通路の確保" />)}
    <T x={1370} y={245.3} s={2.5} w={13} t="1.安全目標" bold />
    <rect x="1370.7" y="247.7" width="19.3" height="6.2" fill="#ff0000" />
    <T x={1364.5} y={252} s={3} t="赤" />
    <T x={1374} y={257.5} s={2.4} t="連絡" bold />
    <T x={1370} y={270.3} s={2.4} w={12} t="定例打合せ" bold />
    {[274.3, 277.6, 281].map((y) => <T key={y} x={1370} y={y} s={2.2} w={12} t="災害防止 1" />)}
    <T x={1374} y={285.3} s={2.3} t="備考" bold />
    {[292, 295.5, 302, 305.5, 316, 319.5, 323, 327, 330.3, 333.6].map((y, i) => (
      <T key={y} x={1361.7} y={y} s={2.2} w={i > 5 ? 27 : 9} t="安全衛生協議会連絡" bold />
    ))}

    <V x={1143} y1={338.7} y2={347.7} w={0.5} />
    <T x={1110} y={344} s={3} w={9} t="特記事項" bold />
    {[1157, 1198, 1232].map((x) => (
      <g key={x}>
        <T x={x} y={341.8} s={2.2} w={15} t="1.安全衛生目標" />
        <T x={x} y={345.5} s={2.4} w={20} t="整理整頓の実施徹底" bold />
      </g>
    ))}
  </g>
);

const WeeklyChart = () => (
  <g>
    <T x={773} y={385.5} s={3.6} w={31} t="木川複線新サンプル工事" fill="#444" />
    <T x={818} y={396.7} s={3.6} w={56} t="週間工程表 (2020/11/01〜2021/11/21)" fill="#333" />
    <T x={1002} y={396.5} s={3.4} w={16} t="作成者: 青山" fill="#333" />
    <T x={1033} y={396} s={3.4} w={18} t="2020/12/01" fill="#777" />
    <Box x1={751} y1={399.3} x2={1054} y2={590} c="#777" />
    <rect x="1054.3" y="399" width="2.5" height="186" fill="#e2e2e2" />
    <H y={414.3} x1={751} x2={792} c="#555" />
    <H y={418.3} x1={1013} x2={1054} c="#555" w={1} />
    <rect x="751.3" y="431.3" width="40.7" height="155" fill="#ffe0d4" />
    {[5, 12, 19].map((c) => (
      <rect key={c} x={792 + c * 10.53} y="431" width="21.1" height="155" fill="#ffbdbd" />
    ))}
    {range(22).map((i) => (
      <V key={i} x={792 + i * 10.53} y1={400} y2={586} c={i % 7 ? "#aaa" : "#777"} w={i === 21 ? 1.2 : 0.7} />
    ))}
    {range(14).map((i) => (
      <H key={i} y={450 + i * 9.65} x1={792} x2={1013} c={i === 4 || i === 9 ? "#555" : "#999"} w={0.7} />
    ))}
    <V x={758.3} y1={431.3} y2={586} c="#555" />
    <H y={488.5} x1={758.3} x2={792} c="#555" />
    <H y={537} x1={758.3} x2={792} c="#555" />
    <T x={754.8} y={500} s={3.2} w={16} t="工事工程計画" vertical />
    {[461.5, 513.5, 562].map((y) => <T key={y} x={760} y={y} s={3} w={4} t="工区" />)}
    <H y={560} x1={1013} x2={1054} c="#888" />
    <V x={823.5} y1={464} y2={493} c="#e99" w={0.6} />
    <H y={493.3} x1={845} x2={866} c="#e55" w={0.7} />
    <H y={493.3} x1={992} x2={1013} c="#e55" w={0.7} />
    <H y={541.3} x1={845} x2={866} c="#e55" w={0.7} />
    <path d="M802.5 493v12M876.5 493v18M866 493v18M960 493v9M792 493.3h30M792 541.3h50M866 541.3h95M813.5 541v10" fill="none" stroke="#c99" strokeWidth="0.6" />
    {[[792, 488], [792, 491.7], [803, 488], [803, 491.7], [813, 491.7], [826, 491.7], [860, 491.7], [868, 491.7], [877, 491.7], [897, 488], [897, 491.7], [908, 491.7], [950, 488], [950, 491.7], [960.5, 488], [960.5, 491.7], [972, 491.7], [982, 491.7], [794, 501], [866, 501], [878, 501], [961, 501], [858, 510.5], [867, 510.5], [877, 510.5], [792, 539.5], [803, 535.8], [803, 539.5], [813.5, 535.8], [813.5, 539.5], [824, 539.5], [835, 539.5], [867, 539.5], [887, 539.5], [814, 548.5]].map(([x, y], i) => (
      <T key={i} x={x} y={y} s={2.4} w={i % 3 === 1 ? 5 : 7} t={i % 3 === 1 ? "墨出" : "配筋検査"} fill="#222" bold />
    ))}
  </g>
);

const SafetyChart = () => (
  <g>
    <Box x1={1083.3} y1={373.7} x2={1396.3} y2={585.3} c="#888" />
    <T x={1093.5} y={381.8} s={3.8} w={35} t="土木工事共同企業体" bold />
    <T x={1181.7} y={382.4} s={4.8} w={60} t="２　月 安全衛生管理計画表" bold />
    <H y={384.2} x1={1177} x2={1248} c="#aaa" w={0.4} />
    <T x={1293} y={384.8} s={2.6} w={28} t="作成日　令和5年2月1日" fill="#333" />
    <T x={1088} y={391.3} s={3.6} w={31} t="今月の重点目標：" fill="#888" />
    <T x={1137} y={391.3} s={3.6} w={73} t="重機関連災害の防止、揚重関連災害の防止" bold />
    <Box x1={1324.5} y1={373.7} x2={1396.3} y2={385.7} c="#aaa" w={0.5} />
    <H y={377} x1={1324.5} x2={1396.3} c="#aaa" w={0.5} />
    <T x={1325} y={376.4} s={2.4} w={31} t="統括安全責任者 元方安全管理者" />
    <T x={1374} y={376.4} s={2.4} t="担当" />
    {[1340.7, 1356].map((x) => <V key={x} x={x} y1={373.7} y2={385.7} c="#999" w={0.5} />)}
    {[385.7, 393.3].map((y) => <H key={y} y={y} x1={1083.3} x2={1396.3} c="#999" w={0.6} />)}
    <V x={1138.7} y1={373.7} y2={385.7} c="#999" w={0.5} />
    <rect x="1135" y="394" width="237" height="2.5" fill="#f4f3e4" />
    <T x={1254} y={395.8} s={2.2} t="2023年" anchor="middle" />
    <T x={1213} y={398.5} s={2.2} t="2月" anchor="middle" />
    <T x={1332} y={398.5} s={2.2} t="3月" anchor="middle" />
    <T x={1380} y={398.5} s={3.2} w={9} t="備　考" bold />

    <rect x="1083.3" y="403.3" width="51.7" height="123.4" fill="#efeedb" />
    <rect x="1135" y="486.5" width="237" height="4.5" fill="#efeedb" />
    {range(7).map((w) => (
      <V key={w} x={1135 + w * 39.5} y1={393.3} y2={585.3} c="#999" w={0.5} />
    ))}
    {range(42).map((i) => (
      <g key={i}>
        <V x={1135 + i * 5.643} y1={397} y2={526.7} c="#ddd" w={0.5} />
        <V x={1135 + i * 5.643} y1={526.7} y2={534.3} c="#999" w={0.5} />
        <V x={1135 + i * 5.643} y1={538} y2={553.7} c="#bbb" w={0.5} />
      </g>
    ))}
    {range(14).map((i) => <H key={i} y={465 + i * 4.7} x1={1135} x2={1372} c="#ddd" w={0.5} />)}
    {range(6).map((w) => (
      <g key={w}>
        <rect x={1135 + w * 39.5 + 33.9} y="398" width="5.643" height="128.7" fill="#ffbebe" />
        <rect x={1135 + w * 39.5 + 33.9} y="526.7" width="5.643" height="27" fill="#c0c0c0" />
        <rect x={1135 + w * 39.5} y="534.5" width="39.3" height="3.4" fill={WEEK_COLORS[w] === "none" ? "#fff" : WEEK_COLORS[w]} />
        {RISKS[w].map((t, n) => (
          <T key={n} x={1136 + w * 39.5} y={556.2 + n * 2.25} s={2.2} w={Math.min(37, t.length * 2.1)} t={t} bold />
        ))}
        {MEASURES[w].map((t, n) => (
          <T key={n} x={1136 + w * 39.5} y={567 + n * 2.25} s={2.2} w={Math.min(37, t.length * 2.1)} t={t} bold />
        ))}
        {CHECKS[w].map((t, n) => (
          <T key={n} x={1136 + w * 39.5} y={579.3 + n * 2.25} s={2.2} w={Math.min(37, t.length * 2.1)} t={t} bold />
        ))}
        {EVENTS[w].map((t, n) => (t ? (
          <T key={n} x={1138 + w * 39.5 + n * 5.643} y={546 - t.length * 0.75} s={2.3} w={t.length * 1.5} t={t} vertical bold />
        ) : null))}
      </g>
    ))}
    {range(42).map((i) => (
      <T key={i} x={1137.8 + i * 5.643} y={401.6} s={2.6} t={WEEK[i % 7]} anchor="middle" />
    ))}
    {[472.3, 499, 516.3].map((y) => <H key={y} y={y} x1={1135} x2={1372} c="#eda0a0" w={0.7} />)}
    {[477.7, 481.7, 490.7, 494.7, 507.7].map((y) => <H key={y} y={y} x1={1135} x2={1372} c="#888" w={0.8} />)}
    <H y={485.7} x1={1135} x2={1158} c="#999" />
    <V x={1158} y1={464} y2={485} c="#cf9be0" w={0.6} />
    {[475.5, 480, 484.5].map((y) => <T key={y} x={1135.5} y={y} s={2.4} w={8} t="シールド工" />)}
    <T x={1135.5} y={493.7} s={2.4} w={12} t="中間立坑築造工" />
    <T x={1135.5} y={506.7} s={2.4} w={12} t="中間立坑築造工" />

    <V x={1093.3} y1={403.3} y2={526.7} c="#888" w={0.6} />
    <H y={486.3} x1={1093.3} x2={1135} c="#888" w={0.6} />
    <T x={1088.5} y={460} s={2.5} w={10} t="基本工程" vertical bold />
    <T x={1095} y={409} s={2.8} t="準備工" />
    <T x={1095} y={466.5} s={2.8} w={12} t="シールド工" />
    <T x={1095} y={508} s={2.8} w={18} t="中間立坑築造工" />
    {[526.7, 534.3, 537.9, 553.7, 564, 575.3].map((y) => (
      <H key={y} y={y} x1={1083.3} x2={1372} c="#888" w={0.6} />
    ))}
    <H y={530.5} x1={1130} x2={1372} c="#999" w={0.5} />
    <T x={1098} y={532} s={2.7} w={15} t="日 直 当 番" />
    <T x={1130} y={529.8} s={2.2} t="昼" />
    <T x={1130} y={533.5} s={2.2} t="夜" />
    <T x={1100} y={537.1} s={2.3} w={19} t="災防協点検対象者" />
    <T x={1104} y={547} s={2.8} w={11} t="行　　事" />
    <T x={1095} y={560} s={2.6} w={29} t="予 想 さ れ る 災 害" />
    <T x={1095} y={568.5} s={2.4} w={29} t="予 想 さ れ る 災 害" />
    <T x={1095} y={572.3} s={2.4} w={29} t="へ の 防 止 対 策" />
    <T x={1098} y={581.5} s={2.7} w={22} t="点　検　項　目" />
  </g>
);

const samples = [
  { title: "全体工程表", Chart: OverallChart, view: "743 127 313 226", card: "h-[230px] w-[317px]", label: "left-[21px] top-[46px] h-[64px] w-[283px] pb-[9px]" },
  { title: "月間工程表", Chart: MonthlyChart, view: "1080 127 317 226", card: "ml-[20px] h-[230px] w-[321px]", label: "left-[22px] top-[46px] h-[64px] w-[283px] pb-[9px]" },
  { title: "週間工程表", Chart: WeeklyChart, view: "747 373 309 212", card: "ml-[4px] h-[216px] w-[313px]", label: "left-[17px] top-[27px] h-[64px] w-[283px] pb-[9px]" },
  { title: "安全管理工程表", Chart: SafetyChart, view: "1081 373 316 213", card: "ml-[21px] h-[217px] w-[320px]", label: "left-[16px] top-[29px] h-[62px] w-[282px] pb-[7px]" },
];

const SampleCard = ({ sample }) => {
  const { title, Chart, view, card, label } = sample;
  return (
    <div className={`relative shrink-0 border-2 border-[#868686] bg-white ${card}`}>
      <svg className="block h-full w-full" viewBox={view} preserveAspectRatio="none" fontFamily="'Noto Sans CJK JP', sans-serif">
        <Chart />
      </svg>
      <div className={`absolute flex items-center justify-center rounded-[12px] bg-[#1095ce] text-[33.3px] font-bold leading-none text-white ${label}`}>
        {title}
      </div>
    </div>
  );
};

/* ---------- callout ---------- */

const Callout = () => (
  <div className="relative ml-[3px] flex h-[74px] w-[657px] items-center justify-center rounded-[13px] border-[6px] border-[#1095ce] bg-white">
    <span className="whitespace-nowrap pb-[8px] text-[29.1px] font-bold leading-none text-[#2a3350]">
      用途に合わせて様々な印刷枠を設定できます
    </span>
    {/* tail pointing at the highlighted print frame */}
    <svg className="absolute left-[-90px] top-[30px]" width="92" height="46" viewBox="660 69 92 46">
      <path d="M751 77L690 99.5 751 89.5Z" fill="#fff" />
      <path d="M749.5 74.5L664 104.5 748 93" fill="none" stroke={BLUE} strokeWidth="6" strokeLinejoin="bevel" />
    </svg>
  </div>
);

const App = () => {
  return (
    <div className="h-[599px] w-[1413px] overflow-hidden bg-white font-['Noto_Sans_CJK_JP',sans-serif]">
      <div className="flex h-[599px] w-[1413px] items-start rounded-[20px] border-[3px] border-[#808080] pl-[10px] pt-[15px]">
        <AppWindow />
        <div className="ml-[32px] mt-[15px] flex w-[662px] shrink-0 flex-col">
          <Callout />
          <div className="mt-[18px] flex">
            <SampleCard sample={samples[0]} />
            <SampleCard sample={samples[1]} />
          </div>
          <div className="mt-[16px] flex">
            <SampleCard sample={samples[2]} />
            <SampleCard sample={samples[3]} />
          </div>
        </div>
      </div>
    </div>
  );
};

export default App;
